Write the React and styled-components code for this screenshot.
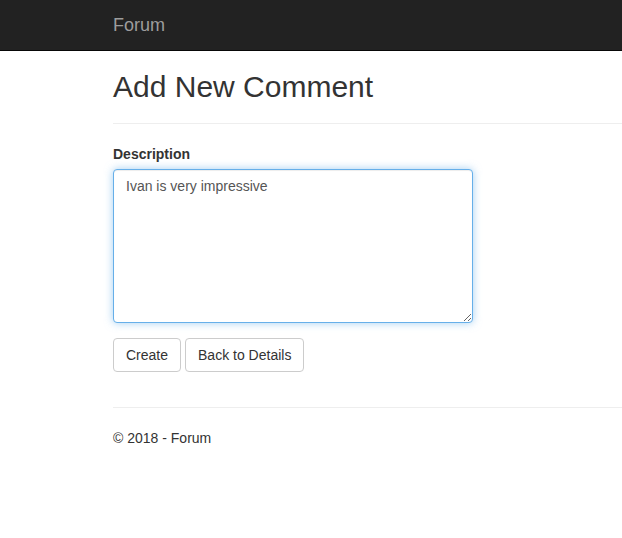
import React from "react";
import styled, { createGlobalStyle } from "styled-components";

const Global = createGlobalStyle`
  html, body { margin: 0; padding: 0; }
  body {
    font-family: "Liberation Sans", Arial, sans-serif;
    font-size: 14px;
    line-height: 1.42857143;
    color: #333;
    background: #fff;
    overflow: hidden;
  }
  * { box-sizing: border-box; }
`;

const Navbar = styled.nav`
  height: 51px;
  background: #222;
  border-bottom: 1px solid #080808;
  display: flex;
  align-items: center;
  padding-left: 113px;
`;

const Brand = styled.a`
  font-size: 18px;
  line-height: 20px;
  color: #9d9d9d;
  text-decoration: none;
`;

const Body = styled.div`
  padding-left: 113px;
`;

const Title = styled.h2`
  font-size: 30px;
  font-weight: 500;
  line-height: 1.1;
  margin: 19px 0 10px;
  color: #333;
`;

const Rule = styled.hr`
  margin: 20px 0;
  border: 0;
  border-top: 1px solid #eee;
  height: 0;
`;

const FormGroup = styled.div`
  margin-bottom: 15px;
`;

const Label = styled.label`
  display: block;
  font-weight: bold;
  margin-bottom: 5px;
`;

const TextArea = styled.textarea`
  display: block;
  width: 360px;
  height: 154px;
  padding: 6px 12px;
  font-family: "Liberation Sans", Arial, sans-serif;
  font-size: 14px;
  line-height: 1.42857143;
  color: #555;
  background: #fff;
  border: 1px solid #66afe9;
  border-radius: 4px;
  outline: 0;
  box-shadow: inset 0 1px 1px rgba(0,0,0,.075), 0 0 8px rgba(102,175,233,.6);
  margin: 0;
`;

const Buttons = styled.div`
  display: flex;
  gap: 4px;
  margin-bottom: 35px;
`;

const Button = styled.button`
  height: 34px;
  padding: 6px 12px;
  font-family: "Liberation Sans", Arial, sans-serif;
  font-size: 14px;
  line-height: 20px;
  color: #333;
  background: #fff;
  border: 1px solid #ccc;
  border-radius: 4px;
  cursor: pointer;
`;

const Footer = styled.footer`
  p { margin: 0; }
`;

export default function App() {
  return (
    <>
      <Global />
      <Navbar>
        <Brand href="#">Forum</Brand>
      </Navbar>
      <Body>
        <Title>Add New Comment</Title>
        <Rule />
        <FormGroup>
          <Label>Description</Label>
          <TextArea defaultValue="Ivan is very impressive" />
        </FormGroup>
        <Buttons>
          <Button>Create</Button>
          <Button>Back to Details</Button>
        </Buttons>
        <Rule />
        <Footer>
          <p>© 2018 - Forum</p>
        </Footer>
      </Body>
    </>
  );
}
